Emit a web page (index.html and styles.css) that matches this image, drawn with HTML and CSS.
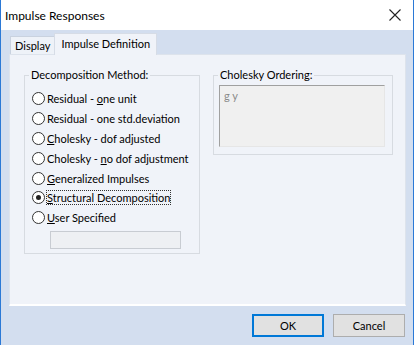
FILE: index.html
```html
<!DOCTYPE html>
<html>
<head>
<meta charset="utf-8">
<link rel="stylesheet" href="styles.css">
</head>
<body>
<div class="window">
  <div class="titlebar">
    <span class="title">Impulse Responses</span>
    <svg class="close" width="12" height="12" viewBox="0 0 12 12"><path d="M0.5 0.5 L11.5 11.5 M11.5 0.5 L0.5 11.5" stroke="#222" stroke-width="1.1" fill="none"/></svg>
  </div>
  <div class="body">
    <div class="tabs">
      <div class="tab">Display</div>
      <div class="tab active">Impulse Definition</div>
    </div>
    <div class="panel">
      <div class="groups">
        <fieldset class="group decomp">
          <legend>Decomposition Method:</legend>
          <div class="inner">
            <div class="radios">
              <div class="radio"><span class="dot"></span><span>Residual - <u>o</u>ne unit</span></div>
              <div class="radio"><span class="dot"></span><span>Residual - one std.deviation</span></div>
              <div class="radio"><span class="dot"></span><span><u>C</u>holesky - dof adjusted</span></div>
              <div class="radio"><span class="dot"></span><span>Cholesky - <u>n</u>o dof adjustment</span></div>
              <div class="radio"><span class="dot"></span><span><u>G</u>eneralized Impulses</span></div>
              <div class="radio"><span class="dot checked"></span><span class="focus"><u>S</u>tructural Decomposition</span></div>
              <div class="radio"><span class="dot"></span><span><u>U</u>ser Specified</span></div>
            </div>
            <div class="userbox"></div>
          </div>
        </fieldset>
        <fieldset class="group chol">
          <legend>Cholesky Ordering:</legend>
          <div class="inner">
            <div class="ordering">g y</div>
          </div>
        </fieldset>
      </div>
    </div>
    <div class="buttons">
      <div class="btn default">OK</div>
      <div class="btn">Cancel</div>
    </div>
  </div>
</div>
</body>
</html>
```
FILE: styles.css
```css
html, body {
  margin: 0;
  padding: 0;
  width: 414px;
  height: 345px;
  overflow: hidden;
  font-family: "Lato", "Liberation Sans", sans-serif;
  font-size: 11px;
  color: #000;
}
.window {
  width: 414px;
  height: 345px;
  box-sizing: border-box;
  border-left: 1px solid #2b79d6;
  border-right: 1px solid #2b79d6;
  display: flex;
  flex-direction: column;
  background: #d3deef;
}
.titlebar {
  height: 30px;
  background: #fff;
  display: flex;
  align-items: center;
  justify-content: space-between;
  padding: 0 12px 0 4px;
  flex-shrink: 0;
}
.title {
  font-size: 12px;
  color: #000;
}
.close {
  display: block;
}
.body {
  flex: 1;
  padding: 3px 7px 0 8px;
  display: flex;
  flex-direction: column;
}
.tabs {
  display: flex;
  align-items: flex-end;
  height: 21px;
  padding-left: 1px;
  white-space: nowrap;
}
.tab {
  height: 18px;
  line-height: 18px;
  padding: 0 4px;
  border: 1px solid #c9d2df;
  border-bottom: none;
  background: #eef2f8;
  box-sizing: border-box;
}
.tab.active {
  line-height: 20px;
  padding: 0 6px;
  margin-left: -1px;
  background: #f0f3f9;
  border-color: #d6dce6;
  position: relative;
  z-index: 1;
  margin-bottom: -1px;
  height: 22px;
}
.panel {
  height: 252px;
  background: #f0f3f9;
  border: 1px solid #dde3ec;
  border-bottom: 2px solid #fff;
  box-sizing: border-box;
  padding: 13px 12px 0 14px;
}
.groups {
  display: flex;
  align-items: flex-start;
  gap: 13px;
}
.group {
  margin: 0;
  border: 1px solid #d7dbe1;
  padding: 0;
  box-sizing: border-box;
  white-space: nowrap;
}
.group legend {
  padding: 0 2px;
  margin-left: 4px;
  line-height: 14px;
}
.decomp {
  width: 177px;
  height: 186px;
}
.decomp .inner {
  padding: 7px 0 0 7px;
}
.radios {
  display: flex;
  flex-direction: column;
}
.radio {
  display: flex;
  align-items: center;
  height: 19.8px;
  gap: 2px;
}
.dot {
  width: 11px;
  height: 11px;
  border: 1px solid #333;
  border-radius: 50%;
  background: #fff;
  flex-shrink: 0;
  position: relative;
}
.dot.checked::after {
  content: "";
  position: absolute;
  left: 3px;
  top: 3px;
  width: 5px;
  height: 5px;
  border-radius: 50%;
  background: #222;
}
.focus {
  outline: 1px dotted #333;
  outline-offset: 0;
}
.userbox {
  margin: 3px 0 0 18px;
  width: 131px;
  height: 18px;
  box-sizing: border-box;
  background: #eef0f3;
  border: 1px solid #c8ccd2;
}
.chol {
  width: 181px;
  height: 87px;
}
.chol .inner {
  padding: 3px 7px 0 5px;
}
.ordering {
  height: 62px;
  box-sizing: border-box;
  border: 1px solid #a0a0a0;
  border-right-color: #e6e6e6;
  border-bottom-color: #e6e6e6;
  background: #f0f0f0;
  color: #8a8a8a;
  padding: 3px 0 0 4px;
  line-height: 14px;
}
.buttons {
  display: flex;
  justify-content: flex-end;
  gap: 9px;
  padding: 8px 1px 0 0;
}
.btn {
  width: 72px;
  height: 23px;
  box-sizing: border-box;
  border: 1px solid #adadad;
  background: #e1e1e1;
  display: flex;
  align-items: center;
  justify-content: center;
}
.btn.default {
  border: 2px solid #0078d7;
}
```
